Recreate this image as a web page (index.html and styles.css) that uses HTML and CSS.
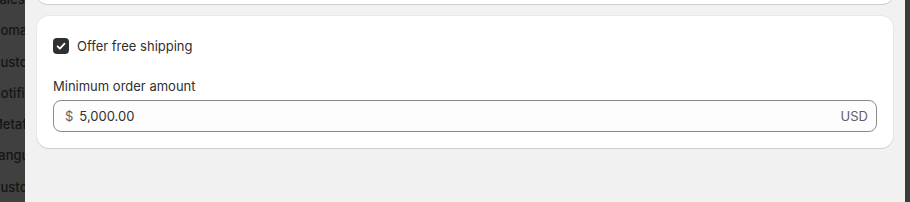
FILE: index.html
```html
<!DOCTYPE html>
<html lang="en">
<head>
<meta charset="utf-8">
<title>Shipping</title>
<link rel="stylesheet" href="styles.css">
</head>
<body>
<div class="app">
  <aside class="sidebar">
    <ul class="nav">
      <li>Sales channels</li>
      <li>Domains</li>
      <li>Customer accounts</li>
      <li>Notifications</li>
      <li>Metafields</li>
      <li>Languages</li>
      <li>Customer privacy</li>
    </ul>
  </aside>
  <main class="main">
    <section class="card card-prev"></section>
    <section class="card">
      <label class="check-row">
        <span class="checkbox">
          <svg viewBox="0 0 16 16" width="16" height="16" aria-hidden="true"><path d="M4.6 8.3l2.3 2.3 4.6-5" fill="none" stroke="#fff" stroke-width="1.8" stroke-linecap="round" stroke-linejoin="round"/></svg>
        </span>
        <span class="check-label">Offer free shipping</span>
      </label>
      <div class="field">
        <div class="field-label">Minimum order amount</div>
        <div class="input">
          <span class="prefix">$</span>
          <span class="value">5,000.00</span>
          <span class="suffix">USD</span>
        </div>
      </div>
    </section>
  </main>
  <div class="edge"></div>
</div>
</body>
</html>
```
FILE: styles.css
```css
html, body {
  margin: 0;
  padding: 0;
  height: 100%;
}
body {
  font-family: Inter, "Noto Sans", sans-serif;
  font-size: 13px;
  color: #303030;
  background: #f1f1f1;
  overflow: hidden;
}
.app {
  display: flex;
  height: 202px;
}
.sidebar {
  width: 25px;
  flex: none;
  background: #404040;
  overflow: hidden;
}
.nav {
  list-style: none;
  margin: -16px 0 0 -9px;
  padding: 0;
  white-space: nowrap;
  color: #151515;
  font-size: 13px;
  font-weight: 500;
}
.nav li {
  height: 31.3px;
  line-height: 31.3px;
}
.main {
  flex: 1;
  padding: 0 12px;
  display: flex;
  flex-direction: column;
  gap: 12px;
  min-width: 0;
}
.edge {
  width: 5px;
  flex: none;
  background: #3b3b3b;
}
.card {
  background: #fff;
  border-radius: 12px;
  box-shadow: 0 1px 0 0 rgba(26, 26, 26, 0.12), 0 0 0 1px rgba(26, 26, 26, 0.04);
  padding: 20px 16px 16px;
}
.card-prev {
  height: 20px;
  margin-top: -16px;
  padding: 0;
  flex: none;
}
.check-row {
  display: flex;
  align-items: center;
  gap: 8px;
  height: 20px;
}
.checkbox {
  width: 16px;
  height: 16px;
  border-radius: 4px;
  background: #303030;
  display: flex;
}
.check-label {
  line-height: 20px;
  color: #303030;
}
.field {
  margin-top: 20px;
}
.field-label {
  line-height: 20px;
  margin-bottom: 4px;
  color: #303030;
}
.input {
  display: flex;
  align-items: center;
  height: 32px;
  box-sizing: border-box;
  border: 1px solid #8a8a8a;
  border-radius: 8px;
  background: #fdfdfd;
  padding: 0 8px 0 11px;
}
.prefix {
  color: #616161;
  margin-right: 6px;
}
.value {
  flex: 1;
  color: #303030;
}
.suffix {
  color: #616161;
}
```
